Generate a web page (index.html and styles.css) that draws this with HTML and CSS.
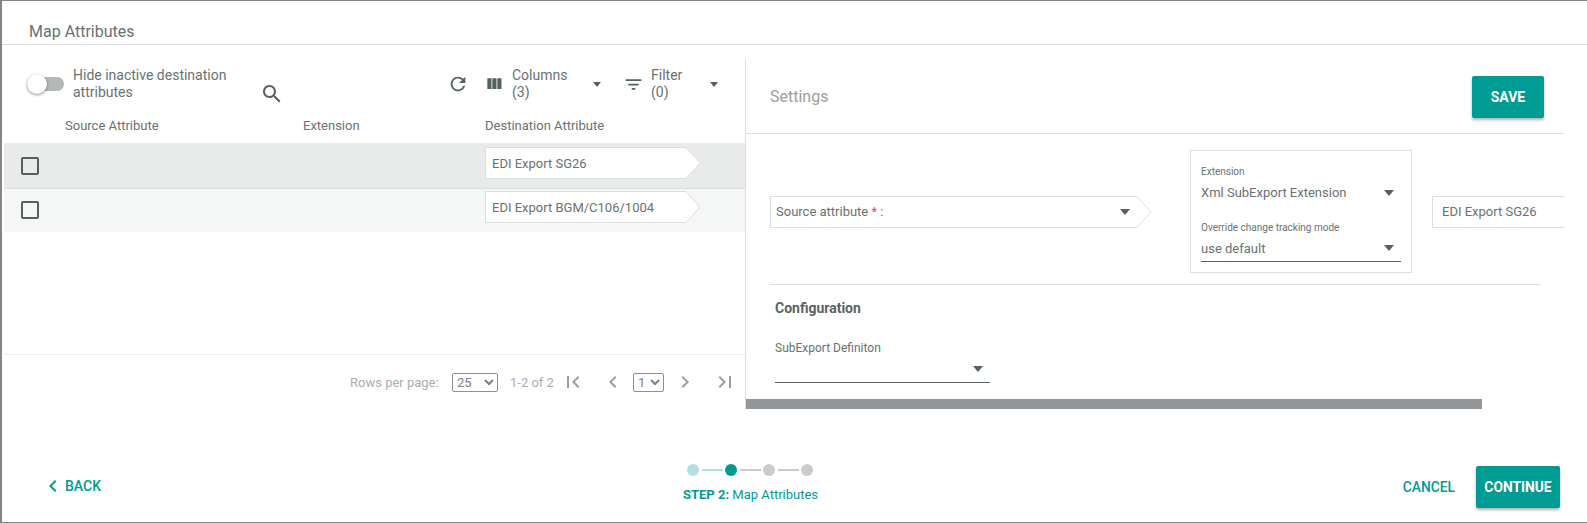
FILE: index.html
```html
<!DOCTYPE html>
<html lang="en">
<head>
  <meta charset="UTF-8">
  <title>Map Attributes</title>
  <link rel="stylesheet" href="styles.css">
</head>
<body>
  <div class="frame">
    <div class="title-bar">Map Attributes</div>

    <div class="main">
      <div class="left">
        <div class="toolbar">
          <div class="toggle"><span class="thumb"></span></div>
          <div class="toggle-label">Hide inactive destination attributes</div>
          <svg class="icon search" viewBox="0 0 24 24"><path d="M15.5 14h-.79l-.28-.27C15.41 12.59 16 11.11 16 9.5 16 5.91 13.09 3 9.5 3S3 5.91 3 9.5 5.91 16 9.5 16c1.61 0 3.09-.59 4.23-1.57l.27.28v.79l5 4.99L20.49 19l-4.99-5zm-6 0C7.01 14 5 11.99 5 9.5S7.01 5 9.5 5 14 7.01 14 9.5 11.99 14 9.5 14z"/></svg>
          <svg class="icon refresh" viewBox="0 0 24 24"><path d="M17.65 6.35C16.2 4.9 14.21 4 12 4c-4.42 0-7.99 3.58-7.99 8s3.57 8 7.99 8c3.73 0 6.84-2.55 7.73-6h-2.08c-.82 2.33-3.04 4-5.65 4-3.31 0-6-2.69-6-6s2.69-6 6-6c1.66 0 3.14.69 4.22 1.78L13 11h7V4l-2.35 2.35z"/></svg>
          <svg class="icon columns" viewBox="0 0 24 24"><path d="M10 18h5V5h-5v13zm-6 0h5V5H4v13zM16 5v13h5V5h-5z"/></svg>
          <div class="tool-text columns-text">Columns (3)</div>
          <span class="caret"></span>
          <svg class="icon filter" viewBox="0 0 24 24"><path d="M10 18h4v-2h-4v2zM3 6v2h18V6H3zm3 7h12v-2H6v2z"/></svg>
          <div class="tool-text filter-text">Filter (0)</div>
          <span class="caret"></span>
        </div>

        <div class="head-row">
          <div class="col-source">Source Attribute</div>
          <div class="col-ext">Extension</div>
          <div>Destination Attribute</div>
        </div>

        <div class="row row-selected">
          <span class="checkbox"></span>
          <div class="tag-wrap">
            <div class="tag tag-row">EDI Export SG26</div>
            <svg class="tag-tip" viewBox="0 0 15 32" preserveAspectRatio="none"><polyline points="0,0.5 14,16 0,31.5"/></svg>
          </div>
        </div>
        <div class="row row-plain">
          <span class="checkbox"></span>
          <div class="tag-wrap">
            <div class="tag tag-row">EDI Export BGM/C106/1004</div>
            <svg class="tag-tip" viewBox="0 0 15 32" preserveAspectRatio="none"><polyline points="0,0.5 14,16 0,31.5"/></svg>
          </div>
        </div>

        <div class="pager">
          <span class="pager-label">Rows per page:</span>
          <select class="pager-select size"><option>25</option></select>
          <span class="pager-range">1-2 of 2</span>
          <svg class="icon pager-icon" viewBox="0 0 24 24"><path d="M18.41 16.59L13.82 12l4.59-4.59L17 6l-6 6 6 6zM6 6h2v12H6z"/></svg>
          <svg class="icon pager-icon prev" viewBox="0 0 24 24"><path d="M15.41 7.41L14 6l-6 6 6 6 1.41-1.41L10.83 12z"/></svg>
          <select class="pager-select page"><option>1</option></select>
          <svg class="icon pager-icon next" viewBox="0 0 24 24"><path d="M10 6L8.59 7.41 13.17 12l-4.58 4.59L10 18l6-6z"/></svg>
          <svg class="icon pager-icon last" viewBox="0 0 24 24"><path d="M5.59 7.41L10.18 12l-4.59 4.59L7 18l6-6-6-6zM16 6h2v12h-2z"/></svg>
        </div>
      </div>

      <div class="right">
        <div class="settings-head">
          <span class="settings-title">Settings</span>
          <button class="btn save">SAVE</button>
        </div>

        <div class="mapping">
          <div class="tag-wrap">
            <div class="tag tag-source">
              <span>Source attribute <em>*</em> :</span>
              <span class="caret"></span>
            </div>
            <svg class="tag-tip" viewBox="0 0 15 32" preserveAspectRatio="none"><polyline points="0,0.5 14,16 0,31.5"/></svg>
          </div>
          <div class="ext-box">
            <div class="small-label">Extension</div>
            <div class="ext-value"><span>Xml SubExport Extension</span><span class="caret"></span></div>
            <div class="small-label second">Override change tracking mode</div>
            <div class="ext-value underlined"><span>use default</span><span class="caret"></span></div>
          </div>
          <div class="tag tag-dest">EDI Export SG26</div>
        </div>

        <div class="config">
          <h4>Configuration</h4>
          <div class="config-label">SubExport Definiton</div>
          <div class="config-select"><span class="caret"></span></div>
        </div>
        <div class="scrollbar"></div>
      </div>
    </div>

    <div class="footer">
      <a class="back">
        <svg class="icon" viewBox="0 0 24 24"><path d="M15.41 7.41L14 6l-6 6 6 6 1.41-1.41L10.83 12z"/></svg>
        BACK
      </a>
      <div class="stepper">
        <div class="steps">
          <span class="dot done"></span><span class="line done"></span>
          <span class="dot active"></span><span class="line"></span>
          <span class="dot"></span><span class="line"></span>
          <span class="dot"></span>
        </div>
        <div class="step-text"><b>STEP 2:</b> Map Attributes</div>
      </div>
      <div class="actions">
        <a class="cancel">CANCEL</a>
        <button class="btn continue">CONTINUE</button>
      </div>
    </div>
  </div>
</body>
</html>
```

FILE: styles.css
```css
* { box-sizing: border-box; }
html, body { margin: 0; padding: 0; }
body { font-family: Roboto, "Liberation Sans", sans-serif; background: #fff; color: #697272; font-size: 13px; overflow: hidden; }

.frame { width: 1587px; height: 523px; border: 1px solid #858585; border-width: 1px 0 1px 2px; display: flex; flex-direction: column; }
.title-bar { height: 44px; flex: none; padding: 21px 0 0 27px; font-size: 16px; line-height: 20px; border-bottom: 1px solid #dcdfdf; }

.main { display: flex; height: 349px; flex: none; margin-top: 15px; }
.left { width: 743px; flex: none; padding-left: 2px; display: flex; flex-direction: column; }
.right { width: 819px; flex: none; border-left: 1px solid #dcdfdf; overflow: hidden; }

.icon { width: 24px; height: 24px; fill: #566060; flex: none; display: block; }

.toolbar { height: 50px; padding-bottom: 2px; display: flex; align-items: center; flex: none; }
.toggle { width: 37px; height: 14px; margin-left: 23px; border-radius: 7px; background: #b5b8b8; position: relative; flex: none; }
.thumb { position: absolute; left: 0; top: -3px; width: 20px; height: 20px; border-radius: 50%; background: #fff; box-shadow: 0 1px 3px rgba(0,0,0,.45); }
.toggle-label { width: 170px; margin-left: 9px; font-size: 14px; line-height: 17px; }
.search { margin: 20px 0 0 17px; }
.refresh { margin-left: 163px; width: 22px; height: 22px; }
.columns { margin-left: 15px; width: 20px; height: 20px; }
.tool-text { font-size: 14px; line-height: 17px; margin-left: 8px; }
.columns-text { width: 81px; padding-right: 20px; }
.filter { margin-left: 22px; width: 21px; height: 21px; }
.filter-text { width: 59px; margin-left: 7px; padding-right: 18px; }

.caret { display: inline-block; width: 0; height: 0; flex: none; border: 4.5px solid transparent; border-top: 5px solid #566060; border-bottom: 0; }
.right .caret { border-width: 6px 5.5px 0; }

.head-row { height: 33px; padding-bottom: 3px; display: flex; align-items: center; padding-left: 61px; font-size: 13px; flex: none; }
.col-source { width: 238px; }
.col-ext { width: 182px; }

.row { display: flex; align-items: flex-start; flex: none; }
.row-selected { height: 46px; background: #e9ebea; border-bottom: 1px solid #dcdfdf; }
.row-plain { height: 43px; background: #f5f6f6; }
.checkbox { width: 18px; height: 18px; margin: 14px 0 0 17px; border: 2px solid #566060; border-radius: 2px; flex: none; }
.row-plain .checkbox { margin-top: 12px; }

.tag-wrap { display: flex; height: 32px; }
.row .tag-wrap { margin: 4px 0 0 446px; }
.row-plain .tag-wrap { margin-top: 2px; }
.tag { height: 32px; background: #fff; border: 1px solid #dcdfdf; border-right: 0; font-size: 13px; display: flex; align-items: center; padding-left: 6px; }
.tag-row { width: 201px; }
.tag-tip { width: 15px; height: 32px; display: block; flex: none; }
.tag-tip polyline { fill: #fff; stroke: #dcdfdf; stroke-width: 1; }

.pager { margin-top: auto; height: 55px; flex: none; border-top: 1px solid #eceeee; display: flex; align-items: center; padding: 15px 0 15px 346px; font-size: 13px; color: #a9adad; }
.pager-label { width: 102px; }
.pager-range { width: 51px; margin-left: 12px; }
.pager-select { height: 19px; font-family: inherit; font-size: 13px; color: #7a8080; background: #fff; border: 1px solid #8d9191; border-radius: 2px; padding: 0; }
.size { width: 46px; }
.page { width: 31px; margin-left: 8px; }
.pager-icon { fill: #9a9e9e; }
.prev { margin-left: 16px; }
.next { margin-left: 9px; }
.last { margin-left: 16px; }

.settings-head { height: 74px; display: flex; align-items: center; justify-content: space-between; padding: 0 20px 0 24px; border-bottom: 1px solid #dcdfdf; }
.settings-title { font-size: 16px; color: #9a9e9e; }
.btn { background: #009b92; color: #fff; border: 0; border-radius: 2px; font-family: inherit; font-weight: 700; font-size: 14px; box-shadow: 0 2px 3px rgba(0,0,0,.3); padding: 0; }
.save { width: 72px; height: 42px; }

.mapping { display: flex; align-items: center; padding: 16px 0 0 24px; }
.tag-source { width: 367px; justify-content: space-between; padding: 0 7px 0 5px; }
.tag-source em { color: #d9534f; font-style: normal; }
.ext-box { width: 222px; height: 123px; margin-left: 38px; border: 1px solid #dcdfdf; padding: 15px 10px 0; }
.small-label { font-size: 10px; line-height: 12px; }
.small-label.second { margin-top: 19px; }
.ext-value { font-size: 13px; height: 21px; line-height: 19px; margin-top: 4px; display: flex; align-items: center; justify-content: space-between; padding-right: 7px; }
.underlined { height: 25px; margin-top: 3px; border-bottom: 1px solid #566060; padding-bottom: 2px; width: 200px; }
.tag-dest { width: 132px; margin-left: 20px; padding-left: 9px; }

.config { margin: 11px 0 0 24px; width: 770px; border-top: 1px solid #dcdfdf; padding: 14px 0 0 5px; height: 115px; }
.config h4 { margin: 0; font-size: 14px; line-height: 18px; font-weight: 700; color: #5a6363; }
.config-label { font-size: 12px; line-height: 14px; margin-top: 24px; }
.config-select { width: 215px; height: 28px; border-bottom: 1px solid #566060; display: flex; align-items: center; justify-content: flex-end; padding-right: 7px; }
.scrollbar { width: 736px; height: 10px; background: #939698; }

.footer { flex: 1; display: flex; align-items: flex-start; padding: 0 27px 0 39px; color: #009b92; }
.back { width: 642px; flex: none; display: flex; align-items: center; margin-top: 65px; font-size: 14px; font-weight: 500; }
.back .icon { fill: #009b92; }
.stepper { margin-top: 55px; display: flex; flex-direction: column; align-items: center; }
.steps { display: flex; align-items: center; height: 12px; margin-right: 1px; }
.dot { width: 12px; height: 12px; border-radius: 50%; background: #c9cccc; }
.dot.done { background: #b2e0dd; }
.dot.active { background: #009b92; }
.line { width: 21px; height: 2px; margin: 0 2.5px; background: #c9cccc; }
.line.done { background: #b2e0dd; }
.step-text { font-size: 13px; line-height: 16px; margin-top: 11px; }
.actions { display: flex; align-items: center; margin: 57px 0 0 auto; }
.cancel { font-size: 13.8px; font-weight: 500; margin-right: 21px; }
.continue { width: 84px; height: 42px; font-size: 13.8px; }
```
